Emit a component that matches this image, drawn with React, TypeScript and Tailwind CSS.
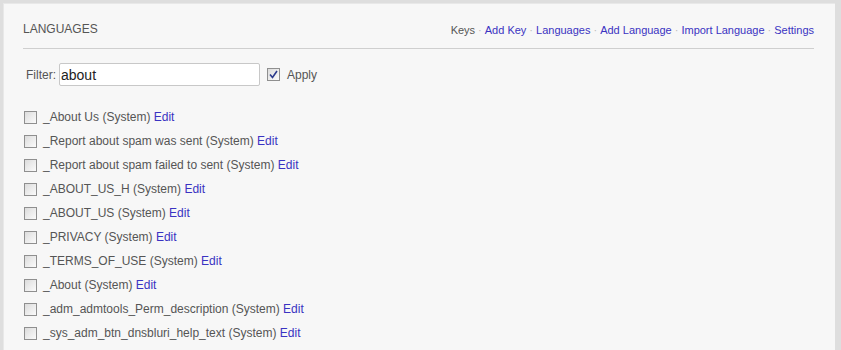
import { useState } from "react";

const links = ["Add Key", "Languages", "Add Language", "Import Language", "Settings"];

const keys = [
  "_About Us",
  "_Report about spam was sent",
  "_Report about spam failed to sent",
  "_ABOUT_US_H",
  "_ABOUT_US",
  "_PRIVACY",
  "_TERMS_OF_USE",
  "_About",
  "_adm_admtools_Perm_description",
  "_sys_adm_btn_dnsbluri_help_text",
];

const Box = ({ checked }: { checked?: boolean }) => (
  <span className="flex h-[13px] w-[13px] shrink-0 items-center justify-center border border-[#8f8f8f] bg-gradient-to-br from-[#dcdcdc] to-[#fbfbfb]">
    {checked && (
      <svg width="9" height="9" viewBox="0 0 9 9">
        <path d="M1 4.5 L3.5 7.5 L8 1" fill="none" stroke="#2b3a8c" strokeWidth="1.6" />
      </svg>
    )}
  </span>
);

export default function App() {
  const [filter, setFilter] = useState("about");

  return (
    <div className="h-[350px] w-[841px] overflow-hidden bg-[#dedede] pl-[3px] pr-[6px] pt-[3px] font-['Liberation_Sans',Arial,sans-serif] text-[12px] text-[#555]">
      <div className="h-full border-l border-t border-[#e8e8e8] bg-[#f7f7f7] pl-[19px] pr-[21px]">
        {/* header */}
        <div className="flex h-[44px] items-end justify-between pb-[10px]">
          <h1 className="text-[12px] uppercase text-[#555]">Languages</h1>
          <div className="flex items-center text-[11px]">
            <span className="text-[#555]">Keys</span>
            {links.map((l) => (
              <span key={l} className="flex items-center">
                <span className="px-[3px] text-[#bbb]">·</span>
                <a href="#" className="text-[#3a33c2]">
                  {l}
                </a>
              </span>
            ))}
          </div>
        </div>
        <div className="h-px bg-[#cfcfcf]" />

        {/* filter */}
        <div className="mt-[14px] flex items-center pl-[3px]">
          <span className="mr-[3px]">Filter:</span>
          <input
            value={filter}
            onChange={(e) => setFilter(e.target.value)}
            className="h-[23px] w-[201px] rounded-[2px] border border-[#c8c8c8] bg-white px-[1px] text-[14px] text-[#222] outline-none"
          />
          <span className="ml-[7px] mr-[7px]">
            <Box checked />
          </span>
          <span>Apply</span>
        </div>

        {/* list */}
        <div className="mt-[19px] flex flex-col">
          {keys.map((k) => (
            <div key={k} className="flex h-[24px] items-center pl-[1px]">
              <Box />
              <span className="ml-[6px]">
                {k} (System) <a href="#" className="text-[#3a33c2]">Edit</a>
              </span>
            </div>
          ))}
        </div>
      </div>
    </div>
  );
}
